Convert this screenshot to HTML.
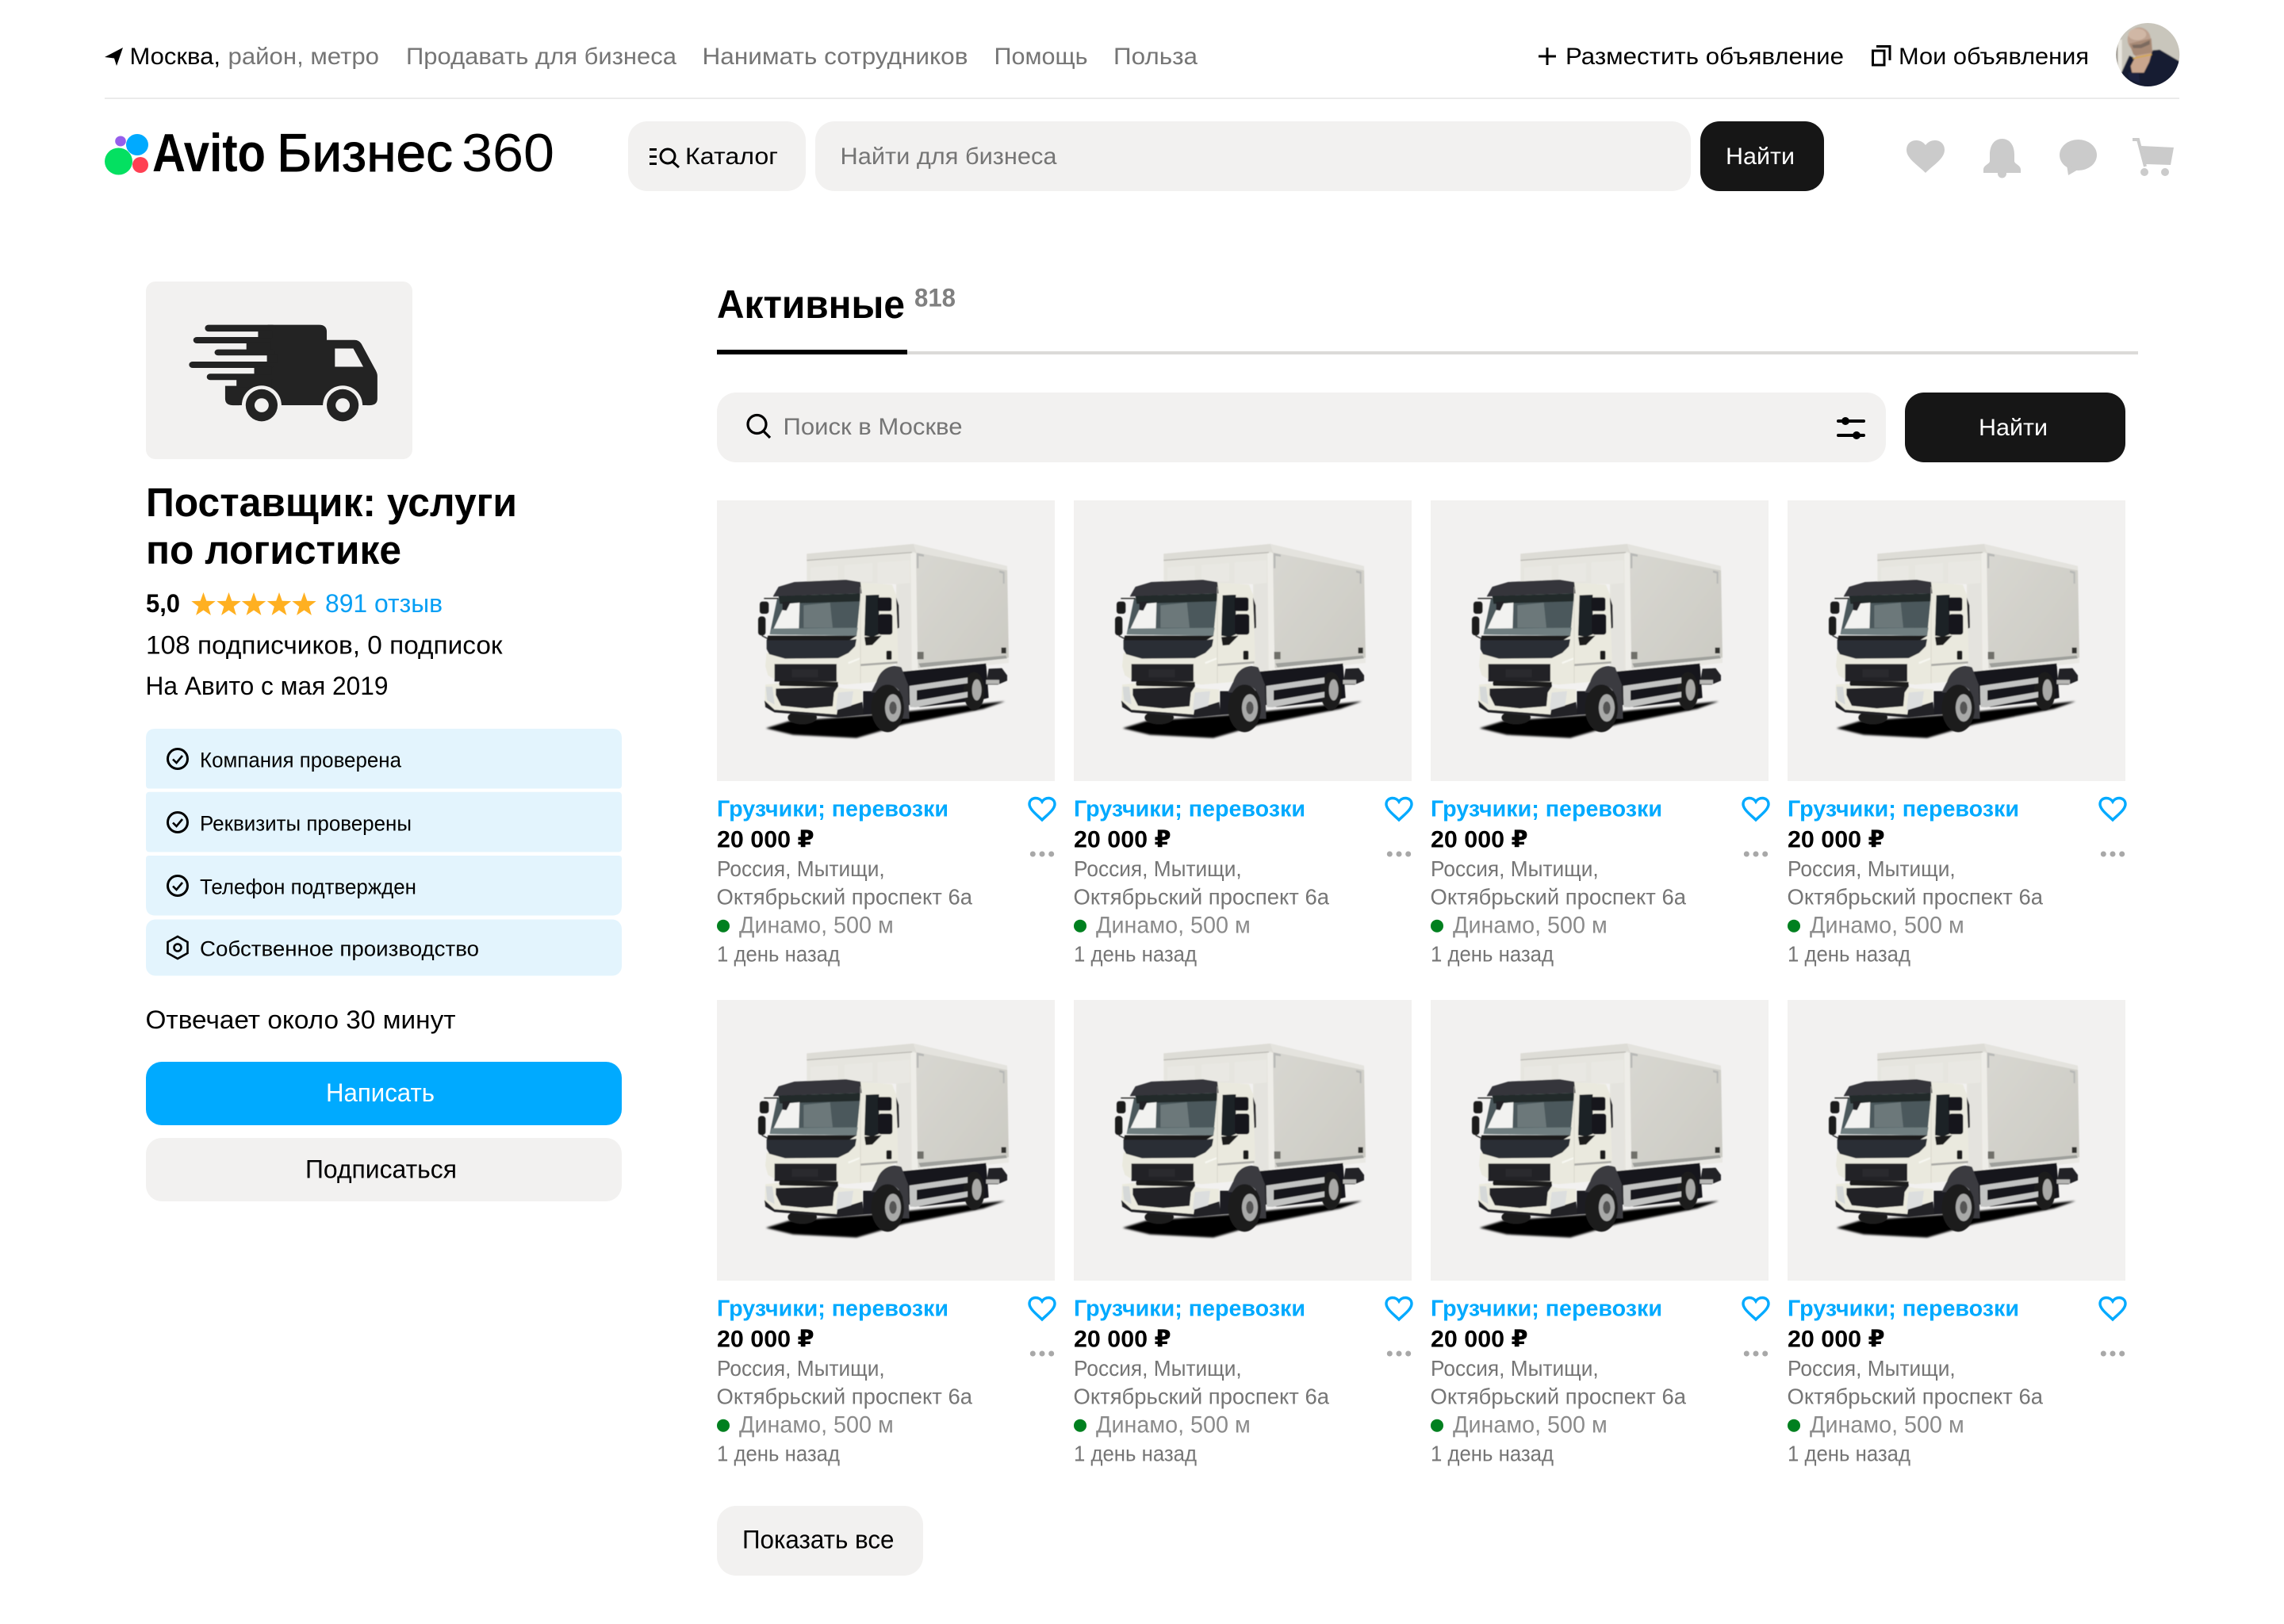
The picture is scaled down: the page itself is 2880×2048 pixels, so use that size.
<!DOCTYPE html>
<html lang="ru">
<head>
<meta charset="utf-8">
<title>Avito Бизнес 360</title>
<style>
html,body{margin:0;padding:0;background:#fff;width:2880px;height:2048px;overflow:hidden}
svg{display:block}
text{font-family:"Liberation Sans","DejaVu Sans",sans-serif;white-space:pre}
.n{font-size:30px;fill:#757575}
.k{font-size:30px;fill:#000}
.m{font-size:32px;fill:#000}
.r{font-size:26.5px;fill:#000}
.ct{font-size:29px;font-weight:700;fill:#00aaff}
.cp{font-size:30px;font-weight:700;fill:#000}
.cg{font-size:27.5px;fill:#757575}
.cd{font-size:30px;fill:#8b8b8b}
</style>
</head>
<body>
<svg xmlns="http://www.w3.org/2000/svg" width="2880" height="2048" viewBox="0 0 2880 2048">
<defs>
<filter id="soft" x="-5%" y="-5%" width="110%" height="110%"><feGaussianBlur stdDeviation="1.8"/></filter>
<filter id="shad" x="-10%" y="-30%" width="120%" height="160%"><feGaussianBlur stdDeviation="4"/></filter>
<filter id="avb" x="-10%" y="-10%" width="120%" height="120%"><feGaussianBlur stdDeviation="2.5"/></filter>
<linearGradient id="boxside" x1="0" y1="0" x2="1" y2="1"><stop offset="0" stop-color="#d9d8d2"/><stop offset="1" stop-color="#cbcac3"/></linearGradient>
<clipPath id="av"><circle cx="2708.3" cy="69" r="40"/></clipPath>
<symbol id="photo" overflow="visible" viewBox="0 0 426 354" width="426" height="354">
<g transform="scale(.33333) translate(-12,-33)">
<g filter="url(#shad)"><path d="M197 895 L285 868 L600 845 L1102 793 L1020 822 L720 880 L540 932 L300 920Z" fill="#000"/></g>
<g filter="url(#soft)">
<!-- box -->
<path d="M352 235 L755 198 L768 232 L768 682 L690 690 L690 350 L352 340Z" fill="#e6e5df"/>
<path d="M352 235 L755 198 L760 228 L352 260Z" fill="#dddcd6"/>
<path d="M352 258 L750 228 L750 232 L352 262Z" fill="#b9b8b2"/>
<path d="M366 287 L470 280 L470 340 L366 340Z M495 278 L600 270 L600 340 L495 340Z M620 268 L742 260 L742 350 L620 350Z" fill="#e9e8e3"/>
<path d="M695 350 L745 345 L745 680 L695 680Z" fill="#e4e3de"/>
<path d="M755 198 L1110 282 L1116 628 L772 668 L762 232Z" fill="url(#boxside)"/>
<path d="M755 198 L1110 282 L1110 298 L765 230Z" fill="#e4e3de"/>
<path d="M768 232 L795 238 V246 L775 243 V290 L768 290Z M1080 298 L1100 303 V348 L1094 348 V310 L1080 306Z" fill="#b7b8b6"/>
<path d="M745 232 L765 232 L772 680 L750 682Z" fill="#eeede8"/>
<path d="M775 650 L1105 620 L1110 632 L782 665Z" fill="#9fa09c"/>
<path d="M772 668 L1116 630 L1116 648 L778 686Z" fill="#e9e8e3"/>
<rect x="770" y="606" width="24" height="28" fill="#70706a"/><rect x="1088" y="590" width="18" height="22" fill="#33332f"/>
<!-- chassis -->
<path d="M700 682 L1030 650 L1040 780 L1000 790 L780 815 L700 800Z" fill="#18181a"/>
<ellipse cx="985" cy="755" rx="40" ry="72" fill="#1f1e1e"/><ellipse cx="995" cy="750" rx="18" ry="40" fill="#a8a8a6"/>
<path d="M740 735 L960 703 L960 725 L768 752 L768 790 L960 757 L960 778 L765 816 L742 815Z" fill="#c2c3c2"/>
<path d="M1040 670 L1090 668 L1110 695 L1110 715 L1075 730 L1030 730Z" fill="#232325"/><rect x="1030" y="712" width="50" height="16" fill="#b5b5b3"/>
<g transform="translate(150 300)">
<ellipse cx="185" cy="555" rx="55" ry="26" fill="#1b1a1a"/>
<!-- cab -->
<path d="M405 45 L525 52 L540 90 L548 345 L500 370 L465 420 L405 425 L345 430 L300 425 L80 410 L55 395 L45 360 L50 310 L350 310Z" fill="#eae9de"/>
<path d="M540 100 L550 130 L552 215 L545 218Z" fill="#26262a"/>
<path d="M75 95 L95 60 L155 42 L350 33 L405 42 L410 85 L250 90 L75 97Z" fill="#35353a"/>
<path d="M90 105 L405 90 L390 245 L62 240Z" fill="#4b585b"/>
<path d="M95 95 L405 85 L402 115 L170 122 L100 125Z" fill="#202a2c"/>
<path d="M120 125 L175 120 L172 218 L75 222Z" fill="#f2f2f0"/>
<path d="M190 130 L290 120 L300 215 L190 215Z" fill="#6c787a"/>
<path d="M62 240 L390 245 L395 215 L70 218Z" fill="#6f7e80"/>
<path d="M110 118 L142 115 L125 150 L110 148Z" fill="#202225"/>
<path d="M55 245 L392 245 L360 264 L50 264Z" fill="#1a1a1d"/>
<path d="M50 262 L355 262 L390 258 L385 285 L360 310 L320 330 L120 332 L60 315 L50 295Z" fill="#2c2e35"/>
<path d="M425 92 L475 90 L475 240 L450 250 L420 245Z" fill="#1e2125"/>
<rect x="470" y="100" width="53" height="52" rx="8" fill="#17181b"/><rect x="472" y="163" width="54" height="78" rx="10" fill="#17181b"/>
<path d="M420 250 L485 245 L450 280 L425 282Z" fill="#1a1b1e"/>
<rect x="24" y="116" width="34" height="46" rx="10" fill="#1b1b1d"/><rect x="18" y="172" width="28" height="72" rx="12" fill="#1b1b1d"/>
<path d="M40 104 H95 M32 245 L52 255" stroke="#1b1b1d" stroke-width="4" fill="none"/>
<path d="M405 352 L545 342 V350 L405 360Z" fill="#aaaaa6"/>
<rect x="503" y="302" width="20" height="34" rx="5" fill="#1c1c1f"/>
<path d="M358 345 L402 328 L402 335 L360 352Z" fill="#f7f7f1"/>
<path d="M405 60 L405 425" stroke="#cfcec4" stroke-width="2"/>
<path d="M80 352 H315 V418 H80Z" fill="#212125"/>
<rect x="145" y="372" width="100" height="30" fill="#2b2b2f"/>
<path d="M100 415 L320 420 L320 440 L95 435Z" fill="#1c1c1f"/>
<path d="M45 430 L95 425 L100 435 L320 440 L345 445 L412 448 L412 495 L318 525 L315 545 L80 530 L42 510Z" fill="#ebeade"/>
<path d="M85 445 L320 438 L305 460 L300 512 L200 520 L105 510 L85 470Z" fill="#242428"/>
<path d="M42 490 L80 525 L315 543 L318 525 L412 495 L418 545 L320 555 L80 535 L45 515Z" fill="#232326"/>
<path d="M47 438 L72 438 L80 505 L52 490Z" fill="#d5d8d8"/>
<path d="M320 460 L378 455 L370 510 L312 527Z" fill="#dcdede"/>
<path d="M415 455 L490 455 L490 540 L415 545Z" fill="#1d1d20"/>
<path d="M465 420 C480 370 520 350 560 365 L585 430 L590 560 L560 560 L565 480 C545 420 500 430 490 460 L445 460Z" fill="#3a3b41"/>
<ellipse cx="508" cy="520" rx="62" ry="90" fill="#1f1d1d"/>
<ellipse cx="528" cy="518" rx="30" ry="52" fill="#a8a9a8"/><ellipse cx="528" cy="518" rx="14" ry="24" fill="#555"/>
</g>
</g>
</g>
</symbol>
</defs>

<rect width="2880" height="2048" fill="#fff"/>

<!-- Top bar -->
<path d="M155 60 L132 72 L144 73.5 L147 83Z" fill="#000"/>
<text class="k" x="163.5" y="81" textLength="114.5" lengthAdjust="spacingAndGlyphs">Москва,</text>
<text class="n" x="287.5" y="81" textLength="190.5" lengthAdjust="spacingAndGlyphs">район, метро</text>
<text class="n" x="512" y="81" textLength="341" lengthAdjust="spacingAndGlyphs">Продавать для бизнеса</text>
<text class="n" x="885.5" y="81" textLength="335" lengthAdjust="spacingAndGlyphs">Нанимать сотрудников</text>
<text class="n" x="1253.5" y="81" textLength="118" lengthAdjust="spacingAndGlyphs">Помощь</text>
<text class="n" x="1404" y="81" textLength="106" lengthAdjust="spacingAndGlyphs">Польза</text>
<path d="M1940 71 H1962 M1951 60 V82" stroke="#000" stroke-width="3" fill="none"/>
<text class="k" x="1974" y="81" textLength="351" lengthAdjust="spacingAndGlyphs">Разместить объявление</text>
<path d="M2361.5 64 H2376 V82 H2361.5Z M2366 58.5 H2383 V76" stroke="#000" stroke-width="3" fill="none"/>
<text class="k" x="2394" y="81" textLength="240" lengthAdjust="spacingAndGlyphs">Мои объявления</text>
<g clip-path="url(#av)">
<g transform="translate(2660 20) scale(.33333)">
<g filter="url(#avb)">
<rect x="15" y="20" width="260" height="260" fill="#c9c6bc"/>
<rect x="15" y="90" width="16" height="120" fill="#8f8b82"/>
<rect x="31" y="90" width="16" height="130" fill="#e8e6df"/>
<path d="M190 128 L270 175 V280 H20 V215 L45 215 L75 150 L115 170 L165 130Z" fill="#141a33"/>
<ellipse cx="112" cy="90" rx="44" ry="46" fill="#bda18f"/>
<ellipse cx="105" cy="70" rx="34" ry="22" fill="#d0b7a5"/>
<path d="M75 105 L158 85 L162 135 L150 155 L115 165 L90 145Z" fill="#a88a76"/>
<path d="M85 110 L118 108 L152 92 L152 108 L120 122 L90 122Z" fill="#7b6a5e"/>
<path d="M100 150 L160 140 L150 175 L130 215 L85 215 L80 190Z" fill="#c9a58d"/>
<path d="M88 161 L160 146" stroke="#d3a84a" stroke-width="5" fill="none"/>
<path d="M70 215 L110 215 L115 255 L75 240Z" fill="#1b2340"/>
</g>
</g>
</g>
<rect x="132" y="123" width="2616" height="2" fill="#ebebeb"/>

<!-- Logo -->
<ellipse cx="149.5" cy="203.5" rx="17.5" ry="17" fill="#04e061"/>
<ellipse cx="173" cy="182.5" rx="14" ry="13.5" fill="#0af"/>
<ellipse cx="152" cy="178" rx="6.8" ry="6.5" fill="#965eeb"/>
<ellipse cx="177" cy="208" rx="10" ry="10" fill="#ff4053"/>
<text x="192" y="216" font-size="68" font-weight="700" fill="#000" textLength="143" lengthAdjust="spacingAndGlyphs">Avito</text>
<text x="349" y="216" font-size="68" fill="#000" stroke="#000" stroke-width="1" textLength="222" lengthAdjust="spacingAndGlyphs">Бизнес</text>
<text x="582" y="216" font-size="68" fill="#000" textLength="117" lengthAdjust="spacingAndGlyphs">360</text>

<!-- Search header -->
<rect x="792" y="153" width="224" height="88" rx="24" fill="#f2f1f0"/>
<path d="M819 188.5 H828 M819 197.5 H828 M819 206.5 H828" stroke="#000" stroke-width="3" fill="none"/>
<circle cx="842" cy="197" r="9" stroke="#000" stroke-width="3" fill="none"/>
<path d="M848 204 L856 211" stroke="#000" stroke-width="3" fill="none"/>
<text class="k" x="864" y="207" textLength="117" lengthAdjust="spacingAndGlyphs">Каталог</text>
<rect x="1028" y="153" width="1104" height="88" rx="24" fill="#f2f1f0"/>
<text class="n" x="1059.5" y="207" textLength="273" lengthAdjust="spacingAndGlyphs">Найти для бизнеса</text>
<rect x="2144" y="153" width="156" height="88" rx="24" fill="#161616"/>
<text class="k" style="fill:#fff" x="2176" y="207" textLength="87" lengthAdjust="spacingAndGlyphs">Найти</text>

<!-- Header grey icons -->
<path d="M2428 218 C2418 208 2404 200 2404 189 C2404 182 2409 177 2416 177 C2421 177 2425 179 2428 183 C2431 179 2435 177 2440 177 C2447 177 2452 182 2452 189 C2452 200 2438 208 2428 218Z" fill="#cbcbcb"/>
<path d="M2524.5 175 C2534 175 2540 183 2540 195 V203 C2540 207 2548 208 2548 214 V218 H2501 V214 C2501 208 2509 207 2509 203 V195 C2509 183 2515 175 2524.5 175Z" fill="#cbcbcb"/>
<circle cx="2524.5" cy="219" r="5.5" fill="#cbcbcb"/>
<ellipse cx="2620.5" cy="195.5" rx="23.5" ry="19.5" fill="#cbcbcb"/>
<path d="M2606 208 L2620 214 L2608 221Z" fill="#cbcbcb"/>
<path d="M2700 184 L2741 186 L2737 208 L2706 207Z" fill="#cbcbcb"/>
<path d="M2689 176 H2696 L2705 210" stroke="#cbcbcb" stroke-width="4" fill="none"/>
<circle cx="2704" cy="217" r="5" fill="#cbcbcb"/><circle cx="2730" cy="217" r="5" fill="#cbcbcb"/>

<!-- Sidebar -->
<rect x="184" y="355" width="336" height="224" rx="12" fill="#f2f1f0"/>
<g transform="translate(150 340) scale(.4464 .3827)" fill="#232323">
<path d="M420 182 H565 Q587 182 587 205 V232 H665 Q678 232 685 245 L722 325 Q730 340 730 350 V425 Q730 447 708 447 H322 Q300 447 300 425 V383 H420Z"/>
<rect x="243" y="182" width="200" height="22" rx="10"/>
<rect x="210" y="222" width="220" height="21" rx="10"/>
<rect x="270" y="263" width="170" height="20" rx="10"/>
<rect x="198" y="303" width="240" height="21" rx="10"/>
<rect x="248" y="343" width="190" height="21" rx="10"/>
<rect x="393" y="200" width="40" height="26"/>
<rect x="360" y="240" width="70" height="26"/>
<rect x="382" y="320" width="50" height="27"/>
<rect x="332" y="360" width="100" height="27"/>
<rect x="418" y="280" width="30" height="26"/>
<path d="M610 260 H662 L690 320 H610Z" fill="#f2f1f0"/>
<ellipse cx="403" cy="447" rx="56" ry="65" fill="#f2f1f0"/>
<ellipse cx="632" cy="447" rx="56" ry="65" fill="#f2f1f0"/>
<rect x="340" y="447" width="360" height="70" fill="#f2f1f0"/>
<ellipse cx="403" cy="447" rx="45" ry="53"/>
<ellipse cx="632" cy="447" rx="45" ry="53"/>
<ellipse cx="403" cy="447" rx="20" ry="23" fill="#f2f1f0"/>
<ellipse cx="632" cy="447" rx="20" ry="23" fill="#f2f1f0"/>
</g>

<text x="184" y="651" font-size="51" font-weight="700" fill="#000" textLength="468" lengthAdjust="spacingAndGlyphs">Поставщик: услуги</text>
<text x="184" y="711" font-size="51" font-weight="700" fill="#000" textLength="322" lengthAdjust="spacingAndGlyphs">по логистике</text>

<text class="m" x="184" y="772" font-weight="700" textLength="43" lengthAdjust="spacingAndGlyphs">5,0</text>
<g fill="#ffb021">
<polygon transform="translate(256.5 763)" points="0,-16 3.8,-5.3 15.2,-4.9 6.2,2 9.4,12.9 0,6.5 -9.4,12.9 -6.2,2 -15.2,-4.9 -3.8,-5.3"/>
<polygon transform="translate(288.5 763)" points="0,-16 3.8,-5.3 15.2,-4.9 6.2,2 9.4,12.9 0,6.5 -9.4,12.9 -6.2,2 -15.2,-4.9 -3.8,-5.3"/>
<polygon transform="translate(320 763)" points="0,-16 3.8,-5.3 15.2,-4.9 6.2,2 9.4,12.9 0,6.5 -9.4,12.9 -6.2,2 -15.2,-4.9 -3.8,-5.3"/>
<polygon transform="translate(352 763)" points="0,-16 3.8,-5.3 15.2,-4.9 6.2,2 9.4,12.9 0,6.5 -9.4,12.9 -6.2,2 -15.2,-4.9 -3.8,-5.3"/>
<polygon transform="translate(383.5 763)" points="0,-16 3.8,-5.3 15.2,-4.9 6.2,2 9.4,12.9 0,6.5 -9.4,12.9 -6.2,2 -15.2,-4.9 -3.8,-5.3"/>
</g>
<text class="m" style="fill:#059ff5" x="410" y="772" textLength="148" lengthAdjust="spacingAndGlyphs">891 отзыв</text>
<text class="m" x="184" y="824.5" textLength="449.5" lengthAdjust="spacingAndGlyphs">108 подписчиков, 0 подписок</text>
<text class="m" x="183.5" y="876" textLength="306" lengthAdjust="spacingAndGlyphs">На Авито с мая 2019</text>

<path d="M196 919 H772 Q784 919 784 931 V990 Q784 994.5 780 994.5 H188 Q184 994.5 184 990 V931 Q184 919 196 919Z" fill="#e3f4fd"/>
<rect x="184" y="998.7" width="600" height="75.8" rx="4" fill="#e3f4fd"/>
<path d="M188 1079 H780 Q784 1079 784 1083 V1142.5 Q784 1154.5 772 1154.5 H196 Q184 1154.5 184 1142.5 V1083 Q184 1079 188 1079Z" fill="#e3f4fd"/>
<rect x="184" y="1159.5" width="600" height="71" rx="12" fill="#e3f4fd"/>

<g fill="none" stroke="#000" stroke-width="3">
<circle cx="224" cy="957" r="12.5"/><path d="M218 957.5 L222.5 962 L230 953" stroke-width="2.6"/>
<circle cx="224" cy="1037" r="12.5"/><path d="M218 1037.5 L222.5 1042 L230 1033" stroke-width="2.6"/>
<circle cx="224" cy="1117" r="12.5"/><path d="M218 1117.5 L222.5 1122 L230 1113" stroke-width="2.6"/>
<path d="M224 1181 L236.5 1188 V1202 L224 1209 L211.5 1202 V1188Z" stroke-width="2.6"/><circle cx="224" cy="1195" r="4.5" stroke-width="2.6"/>
</g>
<text class="r" x="252" y="967.5" textLength="254" lengthAdjust="spacingAndGlyphs">Компания проверена</text>
<text class="r" x="252" y="1047.6" textLength="267" lengthAdjust="spacingAndGlyphs">Реквизиты проверены</text>
<text class="r" x="252" y="1127.6" textLength="273" lengthAdjust="spacingAndGlyphs">Телефон подтвержден</text>
<text class="r" x="252" y="1205.5" textLength="352" lengthAdjust="spacingAndGlyphs">Собственное производство</text>

<text class="m" x="183.5" y="1297" textLength="391" lengthAdjust="spacingAndGlyphs">Отвечает около 30 минут</text>

<rect x="184" y="1339" width="600" height="80" rx="20" fill="#00aaff"/>
<text class="m" style="fill:#fff" x="411" y="1389" textLength="137" lengthAdjust="spacingAndGlyphs">Написать</text>
<rect x="184" y="1435" width="600" height="80" rx="20" fill="#f2f1f0"/>
<text class="m" x="385" y="1485.5" textLength="191" lengthAdjust="spacingAndGlyphs">Подписаться</text>

<!-- Tabs -->
<text x="904" y="401" font-size="50" font-weight="700" fill="#000" textLength="237" lengthAdjust="spacingAndGlyphs">Активные</text>
<text x="1153" y="386.7" font-size="32" font-weight="700" fill="#808080" textLength="52" lengthAdjust="spacingAndGlyphs">818</text>
<rect x="904" y="443" width="1792" height="4" fill="#dbdad8"/>
<rect x="904" y="441" width="240" height="6" fill="#000"/>

<!-- Search -->
<rect x="904" y="495" width="1474" height="88" rx="24" fill="#f2f1f0"/>
<circle cx="954.5" cy="535" r="11.5" stroke="#000" stroke-width="3.2" fill="none"/>
<path d="M962.5 543.5 L971 552" stroke="#000" stroke-width="3.2" fill="none"/>
<text class="n" x="987.5" y="548" textLength="226" lengthAdjust="spacingAndGlyphs">Поиск в Москве</text>
<path d="M2318 531 H2350 M2318 549 H2350" stroke="#000" stroke-width="4" stroke-linecap="round" fill="none"/>
<circle cx="2327" cy="531" r="5" fill="#000"/><circle cx="2341" cy="549" r="5" fill="#000"/>
<rect x="2402" y="495" width="278" height="88" rx="24" fill="#161616"/>
<text class="k" style="fill:#fff" x="2495" y="549" textLength="87" lengthAdjust="spacingAndGlyphs">Найти</text>

<!-- Cards row 1 -->
<g transform="translate(904 631)">
<rect width="426" height="354" fill="#f2f1f0"/><use href="#photo"/>
<text class="ct" x="0" y="398.3" textLength="292" lengthAdjust="spacingAndGlyphs">Грузчики; перевозки</text>
<path d="M410 403 C404 397 394 390 394 383 C394 378 398 375.5 402 375.5 C405.5 375.5 408.5 377.5 410 380 C411.5 377.5 414.5 375.5 418 375.5 C422 375.5 426 378 426 383 C426 390 416 397 410 403Z" fill="none" stroke="#00aaff" stroke-width="3.4"/>
<text class="cp" x="0" y="437.7" textLength="122.7" lengthAdjust="spacingAndGlyphs">20 000 ₽</text>
<circle cx="398.3" cy="446" r="3.5" fill="#a8a8a8"/><circle cx="410" cy="446" r="3.5" fill="#a8a8a8"/><circle cx="421.7" cy="446" r="3.5" fill="#a8a8a8"/>
<text class="cg" x="0" y="474" textLength="211.7" lengthAdjust="spacingAndGlyphs">Россия, Мытищи,</text>
<text class="cg" x="-0.5" y="509.7" textLength="322.5" lengthAdjust="spacingAndGlyphs">Октябрьский проспект 6а</text>
<circle cx="8" cy="536.7" r="8" fill="#00801f"/>
<text class="cd" x="28" y="545.7" textLength="194.7" lengthAdjust="spacingAndGlyphs">Динамо, 500 м</text>
<text class="cg" x="0" y="581.5" textLength="155" lengthAdjust="spacingAndGlyphs">1 день назад</text>
</g>
<g transform="translate(1354 631)">
<rect width="426" height="354" fill="#f2f1f0"/><use href="#photo"/>
<text class="ct" x="0" y="398.3" textLength="292" lengthAdjust="spacingAndGlyphs">Грузчики; перевозки</text>
<path d="M410 403 C404 397 394 390 394 383 C394 378 398 375.5 402 375.5 C405.5 375.5 408.5 377.5 410 380 C411.5 377.5 414.5 375.5 418 375.5 C422 375.5 426 378 426 383 C426 390 416 397 410 403Z" fill="none" stroke="#00aaff" stroke-width="3.4"/>
<text class="cp" x="0" y="437.7" textLength="122.7" lengthAdjust="spacingAndGlyphs">20 000 ₽</text>
<circle cx="398.3" cy="446" r="3.5" fill="#a8a8a8"/><circle cx="410" cy="446" r="3.5" fill="#a8a8a8"/><circle cx="421.7" cy="446" r="3.5" fill="#a8a8a8"/>
<text class="cg" x="0" y="474" textLength="211.7" lengthAdjust="spacingAndGlyphs">Россия, Мытищи,</text>
<text class="cg" x="-0.5" y="509.7" textLength="322.5" lengthAdjust="spacingAndGlyphs">Октябрьский проспект 6а</text>
<circle cx="8" cy="536.7" r="8" fill="#00801f"/>
<text class="cd" x="28" y="545.7" textLength="194.7" lengthAdjust="spacingAndGlyphs">Динамо, 500 м</text>
<text class="cg" x="0" y="581.5" textLength="155" lengthAdjust="spacingAndGlyphs">1 день назад</text>
</g>
<g transform="translate(1804 631)">
<rect width="426" height="354" fill="#f2f1f0"/><use href="#photo"/>
<text class="ct" x="0" y="398.3" textLength="292" lengthAdjust="spacingAndGlyphs">Грузчики; перевозки</text>
<path d="M410 403 C404 397 394 390 394 383 C394 378 398 375.5 402 375.5 C405.5 375.5 408.5 377.5 410 380 C411.5 377.5 414.5 375.5 418 375.5 C422 375.5 426 378 426 383 C426 390 416 397 410 403Z" fill="none" stroke="#00aaff" stroke-width="3.4"/>
<text class="cp" x="0" y="437.7" textLength="122.7" lengthAdjust="spacingAndGlyphs">20 000 ₽</text>
<circle cx="398.3" cy="446" r="3.5" fill="#a8a8a8"/><circle cx="410" cy="446" r="3.5" fill="#a8a8a8"/><circle cx="421.7" cy="446" r="3.5" fill="#a8a8a8"/>
<text class="cg" x="0" y="474" textLength="211.7" lengthAdjust="spacingAndGlyphs">Россия, Мытищи,</text>
<text class="cg" x="-0.5" y="509.7" textLength="322.5" lengthAdjust="spacingAndGlyphs">Октябрьский проспект 6а</text>
<circle cx="8" cy="536.7" r="8" fill="#00801f"/>
<text class="cd" x="28" y="545.7" textLength="194.7" lengthAdjust="spacingAndGlyphs">Динамо, 500 м</text>
<text class="cg" x="0" y="581.5" textLength="155" lengthAdjust="spacingAndGlyphs">1 день назад</text>
</g>
<g transform="translate(2254 631)">
<rect width="426" height="354" fill="#f2f1f0"/><use href="#photo"/>
<text class="ct" x="0" y="398.3" textLength="292" lengthAdjust="spacingAndGlyphs">Грузчики; перевозки</text>
<path d="M410 403 C404 397 394 390 394 383 C394 378 398 375.5 402 375.5 C405.5 375.5 408.5 377.5 410 380 C411.5 377.5 414.5 375.5 418 375.5 C422 375.5 426 378 426 383 C426 390 416 397 410 403Z" fill="none" stroke="#00aaff" stroke-width="3.4"/>
<text class="cp" x="0" y="437.7" textLength="122.7" lengthAdjust="spacingAndGlyphs">20 000 ₽</text>
<circle cx="398.3" cy="446" r="3.5" fill="#a8a8a8"/><circle cx="410" cy="446" r="3.5" fill="#a8a8a8"/><circle cx="421.7" cy="446" r="3.5" fill="#a8a8a8"/>
<text class="cg" x="0" y="474" textLength="211.7" lengthAdjust="spacingAndGlyphs">Россия, Мытищи,</text>
<text class="cg" x="-0.5" y="509.7" textLength="322.5" lengthAdjust="spacingAndGlyphs">Октябрьский проспект 6а</text>
<circle cx="8" cy="536.7" r="8" fill="#00801f"/>
<text class="cd" x="28" y="545.7" textLength="194.7" lengthAdjust="spacingAndGlyphs">Динамо, 500 м</text>
<text class="cg" x="0" y="581.5" textLength="155" lengthAdjust="spacingAndGlyphs">1 день назад</text>
</g>

<!-- Cards row 2 -->
<g transform="translate(904 1261)">
<rect width="426" height="354" fill="#f2f1f0"/><use href="#photo"/>
<text class="ct" x="0" y="398.3" textLength="292" lengthAdjust="spacingAndGlyphs">Грузчики; перевозки</text>
<path d="M410 403 C404 397 394 390 394 383 C394 378 398 375.5 402 375.5 C405.5 375.5 408.5 377.5 410 380 C411.5 377.5 414.5 375.5 418 375.5 C422 375.5 426 378 426 383 C426 390 416 397 410 403Z" fill="none" stroke="#00aaff" stroke-width="3.4"/>
<text class="cp" x="0" y="437.7" textLength="122.7" lengthAdjust="spacingAndGlyphs">20 000 ₽</text>
<circle cx="398.3" cy="446" r="3.5" fill="#a8a8a8"/><circle cx="410" cy="446" r="3.5" fill="#a8a8a8"/><circle cx="421.7" cy="446" r="3.5" fill="#a8a8a8"/>
<text class="cg" x="0" y="474" textLength="211.7" lengthAdjust="spacingAndGlyphs">Россия, Мытищи,</text>
<text class="cg" x="-0.5" y="509.7" textLength="322.5" lengthAdjust="spacingAndGlyphs">Октябрьский проспект 6а</text>
<circle cx="8" cy="536.7" r="8" fill="#00801f"/>
<text class="cd" x="28" y="545.7" textLength="194.7" lengthAdjust="spacingAndGlyphs">Динамо, 500 м</text>
<text class="cg" x="0" y="581.5" textLength="155" lengthAdjust="spacingAndGlyphs">1 день назад</text>
</g>
<g transform="translate(1354 1261)">
<rect width="426" height="354" fill="#f2f1f0"/><use href="#photo"/>
<text class="ct" x="0" y="398.3" textLength="292" lengthAdjust="spacingAndGlyphs">Грузчики; перевозки</text>
<path d="M410 403 C404 397 394 390 394 383 C394 378 398 375.5 402 375.5 C405.5 375.5 408.5 377.5 410 380 C411.5 377.5 414.5 375.5 418 375.5 C422 375.5 426 378 426 383 C426 390 416 397 410 403Z" fill="none" stroke="#00aaff" stroke-width="3.4"/>
<text class="cp" x="0" y="437.7" textLength="122.7" lengthAdjust="spacingAndGlyphs">20 000 ₽</text>
<circle cx="398.3" cy="446" r="3.5" fill="#a8a8a8"/><circle cx="410" cy="446" r="3.5" fill="#a8a8a8"/><circle cx="421.7" cy="446" r="3.5" fill="#a8a8a8"/>
<text class="cg" x="0" y="474" textLength="211.7" lengthAdjust="spacingAndGlyphs">Россия, Мытищи,</text>
<text class="cg" x="-0.5" y="509.7" textLength="322.5" lengthAdjust="spacingAndGlyphs">Октябрьский проспект 6а</text>
<circle cx="8" cy="536.7" r="8" fill="#00801f"/>
<text class="cd" x="28" y="545.7" textLength="194.7" lengthAdjust="spacingAndGlyphs">Динамо, 500 м</text>
<text class="cg" x="0" y="581.5" textLength="155" lengthAdjust="spacingAndGlyphs">1 день назад</text>
</g>
<g transform="translate(1804 1261)">
<rect width="426" height="354" fill="#f2f1f0"/><use href="#photo"/>
<text class="ct" x="0" y="398.3" textLength="292" lengthAdjust="spacingAndGlyphs">Грузчики; перевозки</text>
<path d="M410 403 C404 397 394 390 394 383 C394 378 398 375.5 402 375.5 C405.5 375.5 408.5 377.5 410 380 C411.5 377.5 414.5 375.5 418 375.5 C422 375.5 426 378 426 383 C426 390 416 397 410 403Z" fill="none" stroke="#00aaff" stroke-width="3.4"/>
<text class="cp" x="0" y="437.7" textLength="122.7" lengthAdjust="spacingAndGlyphs">20 000 ₽</text>
<circle cx="398.3" cy="446" r="3.5" fill="#a8a8a8"/><circle cx="410" cy="446" r="3.5" fill="#a8a8a8"/><circle cx="421.7" cy="446" r="3.5" fill="#a8a8a8"/>
<text class="cg" x="0" y="474" textLength="211.7" lengthAdjust="spacingAndGlyphs">Россия, Мытищи,</text>
<text class="cg" x="-0.5" y="509.7" textLength="322.5" lengthAdjust="spacingAndGlyphs">Октябрьский проспект 6а</text>
<circle cx="8" cy="536.7" r="8" fill="#00801f"/>
<text class="cd" x="28" y="545.7" textLength="194.7" lengthAdjust="spacingAndGlyphs">Динамо, 500 м</text>
<text class="cg" x="0" y="581.5" textLength="155" lengthAdjust="spacingAndGlyphs">1 день назад</text>
</g>
<g transform="translate(2254 1261)">
<rect width="426" height="354" fill="#f2f1f0"/><use href="#photo"/>
<text class="ct" x="0" y="398.3" textLength="292" lengthAdjust="spacingAndGlyphs">Грузчики; перевозки</text>
<path d="M410 403 C404 397 394 390 394 383 C394 378 398 375.5 402 375.5 C405.5 375.5 408.5 377.5 410 380 C411.5 377.5 414.5 375.5 418 375.5 C422 375.5 426 378 426 383 C426 390 416 397 410 403Z" fill="none" stroke="#00aaff" stroke-width="3.4"/>
<text class="cp" x="0" y="437.7" textLength="122.7" lengthAdjust="spacingAndGlyphs">20 000 ₽</text>
<circle cx="398.3" cy="446" r="3.5" fill="#a8a8a8"/><circle cx="410" cy="446" r="3.5" fill="#a8a8a8"/><circle cx="421.7" cy="446" r="3.5" fill="#a8a8a8"/>
<text class="cg" x="0" y="474" textLength="211.7" lengthAdjust="spacingAndGlyphs">Россия, Мытищи,</text>
<text class="cg" x="-0.5" y="509.7" textLength="322.5" lengthAdjust="spacingAndGlyphs">Октябрьский проспект 6а</text>
<circle cx="8" cy="536.7" r="8" fill="#00801f"/>
<text class="cd" x="28" y="545.7" textLength="194.7" lengthAdjust="spacingAndGlyphs">Динамо, 500 м</text>
<text class="cg" x="0" y="581.5" textLength="155" lengthAdjust="spacingAndGlyphs">1 день назад</text>
</g>

<rect x="904" y="1899" width="260" height="88" rx="24" fill="#f2f1f0"/>
<text class="m" x="936" y="1952.7" textLength="191.5" lengthAdjust="spacingAndGlyphs">Показать все</text>
</svg>
</body>
</html>
